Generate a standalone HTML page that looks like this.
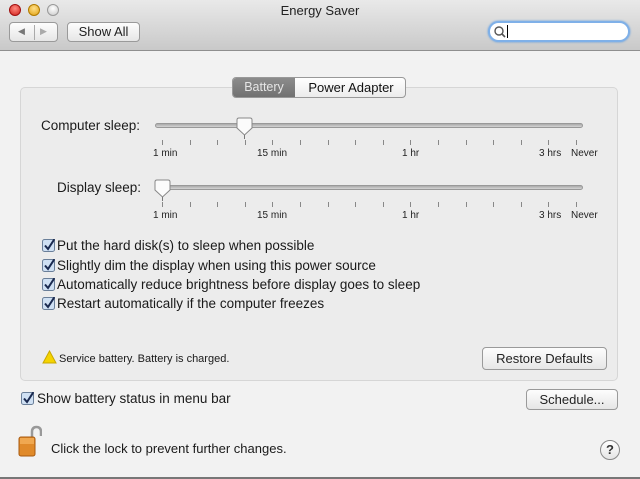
<!DOCTYPE html>
<html><head><meta charset="utf-8"><style>
*{margin:0;padding:0;box-sizing:border-box}
body{width:640px;height:479px;overflow:hidden;background:#f2f2f2;font-family:"Liberation Sans",sans-serif;color:#1a1a1a;position:relative}
.a{position:absolute;white-space:nowrap}
.tb{left:0;top:0;width:640px;height:51px;background:linear-gradient(#e9e9e9,#c9c9c9);border-bottom:1px solid #8f8f8f}
.btn{position:absolute;border:1px solid #9a9a9a;border-radius:4px;background:linear-gradient(#fdfdfd,#e6e6e6);font-size:13px;text-align:center;color:#222}
.dot{position:absolute;width:12px;height:12px;border-radius:50%}
.grp{left:20px;top:87px;width:598px;height:294px;border:1px solid #d6d6d6;border-radius:5px;background:#ececec}
.track{position:absolute;height:5px;border-radius:3px;background:linear-gradient(#aaa,#d4d4d4);border:1px solid #999}
.tick{position:absolute;width:1px;height:5px;background:#888}
.lbl{position:absolute;font-size:10px;color:#222;white-space:nowrap}
.cb{position:absolute;width:13px;height:13px}
.t{font-size:13.5px}
</style></head><body>
<div class="a tb"></div>
<div class="dot" style="left:9px;top:4px;background:radial-gradient(circle at 50% 35%,#ff8a80,#d0201a);border:1px solid #a01010"></div>
<div class="dot" style="left:28px;top:4px;background:radial-gradient(circle at 50% 35%,#ffe08a,#e0a010);border:1px solid #b07a00"></div>
<div class="dot" style="left:47px;top:4px;background:radial-gradient(circle at 50% 35%,#fff,#c8c8c8);border:1px solid #999"></div>
<div class="a" style="left:0;width:640px;text-align:center;top:3px;font-size:13px;color:#222">Energy Saver</div>
<div class="btn" style="left:9px;top:22px;width:49px;height:20px"><span style="position:absolute;left:8px;top:3px;font-size:9px;color:#777">◀</span><span style="position:absolute;left:24px;top:2px;width:1px;height:15px;background:#aaa"></span><span style="position:absolute;left:30px;top:3px;font-size:9px;color:#aaa">▶</span></div>
<div class="btn" style="left:67px;top:22px;width:73px;height:20px;line-height:18px">Show All</div>
<div class="a" style="left:488px;top:21px;width:142px;height:21px;border-radius:11px;background:#fff;border:2px solid #7fb0e8;box-shadow:0 0 2px #5a9ae0"></div>
<svg class="a" style="left:493px;top:25px" width="14" height="14"><circle cx="6" cy="6" r="4" fill="none" stroke="#555" stroke-width="1.4"/><path d="M9 9 L12 12" stroke="#555" stroke-width="1.6"/></svg>
<div class="a" style="left:507px;top:25px;width:1px;height:13px;background:#000"></div>

<div class="a grp"></div>
<div class="a" style="left:232px;top:77px;width:174px;height:21px;border:1px solid #999;border-radius:4px;background:linear-gradient(#fff,#ececec);overflow:hidden">
<div style="position:absolute;left:0;top:0;width:62px;height:21px;background:linear-gradient(#8c8c8c,#6e6e6e);color:#e6e6e6;font-size:12.5px;text-align:center;line-height:19px">Battery</div>
<div style="position:absolute;left:62px;top:0;width:112px;font-size:13px;text-align:center;line-height:19px;color:#111">Power Adapter</div></div>

<div class="a t" style="left:41px;top:118px">Computer sleep:</div>
<div class="track" style="left:155px;top:123px;width:428px"></div>
<div class="a t" style="left:57px;top:180px">Display sleep:</div>
<div class="track" style="left:155px;top:185px;width:428px"></div>
<svg class="a" style="left:236px;top:117px" width="17" height="24"><path d="M1 3 Q1 1 3 1 H14 Q16 1 16 3 V11 L8.5 18 L1 11 Z" fill="#fbfbfb" stroke="#888"/><path d="M8.5 18 V22" stroke="#777"/></svg>
<svg class="a" style="left:154px;top:179px" width="17" height="24"><path d="M1 3 Q1 1 3 1 H14 Q16 1 16 3 V11 L8.5 18 L1 11 Z" fill="#fbfbfb" stroke="#888"/><path d="M8.5 18 V22" stroke="#777"/></svg>
<div id="ticks"></div>
<div class="lbl" style="left:153px;top:148px">1 min</div><div class="lbl" style="left:257px;top:148px">15 min</div><div class="lbl" style="left:402px;top:148px">1 hr</div><div class="lbl" style="left:539px;top:148px">3 hrs</div><div class="lbl" style="left:571px;top:148px">Never</div>
<div class="lbl" style="left:153px;top:210px">1 min</div><div class="lbl" style="left:257px;top:210px">15 min</div><div class="lbl" style="left:402px;top:210px">1 hr</div><div class="lbl" style="left:539px;top:210px">3 hrs</div><div class="lbl" style="left:571px;top:210px">Never</div>

<div class="a t" style="left:57px;top:238px">Put the hard disk(s) to sleep when possible</div>
<div class="a t" style="left:57px;top:258px">Slightly dim the display when using this power source</div>
<div class="a t" style="left:57px;top:277px">Automatically reduce brightness before display goes to sleep</div>
<div class="a t" style="left:57px;top:296px">Restart automatically if the computer freezes</div>

<svg class="a" style="left:42px;top:350px" width="15" height="14"><path d="M7.5 1 L14 13 H1 Z" fill="#f5d400" stroke="#c9a800"/></svg>
<div class="a" style="left:59px;top:353px;font-size:11px">Service battery. Battery is charged.</div>
<div class="btn" style="left:482px;top:347px;width:125px;height:23px;line-height:21px">Restore Defaults</div>
<div class="a t" style="left:37px;top:391px">Show battery status in menu bar</div>
<div class="btn" style="left:526px;top:389px;width:92px;height:21px;line-height:19px">Schedule...</div>

<svg class="a" style="left:18px;top:425px" width="24" height="34"><path d="M14 12 V7 Q14 2 18.5 2 Q23 2 23 7 V11" fill="none" stroke="#999" stroke-width="2.5"/><rect x="1" y="12" width="16" height="19" rx="2" fill="#e08a2a" stroke="#a85a10"/><rect x="2" y="13" width="14" height="6" fill="#f0a850"/></svg>
<div class="a" style="left:51px;top:441px;font-size:13px">Click the lock to prevent further changes.</div>
<div class="a" style="left:600px;top:440px;width:20px;height:20px;border-radius:50%;border:1px solid #888;background:linear-gradient(#fff,#e5e5e5);text-align:center;font-size:13px;line-height:18px;font-weight:bold;color:#333">?</div>
<div class="a" style="left:0;top:477px;width:640px;height:2px;background:#777"></div>

<script>
var h='';[140,202].forEach(function(y){for(var i=0;i<16;i++){var x=162+i*27.6;h+='<div class="tick" style="left:'+Math.round(x)+'px;top:'+y+'px"></div>';}});
var cbs=[[42,239],[42,259],[42,278],[42,297],[21,392]];
cbs.forEach(function(c){h+='<svg class="cb" style="left:'+c[0]+'px;top:'+c[1]+'px" width="14" height="14"><rect x="0.5" y="0.5" width="12" height="12" rx="2" fill="#cfe0f3" stroke="#6a7f99"/><path d="M3 6.5 L6 10 L12.5 0" fill="none" stroke="#1a2a50" stroke-width="2"/></svg>';});
document.getElementById('ticks').innerHTML=h;
</script>
</body></html>
